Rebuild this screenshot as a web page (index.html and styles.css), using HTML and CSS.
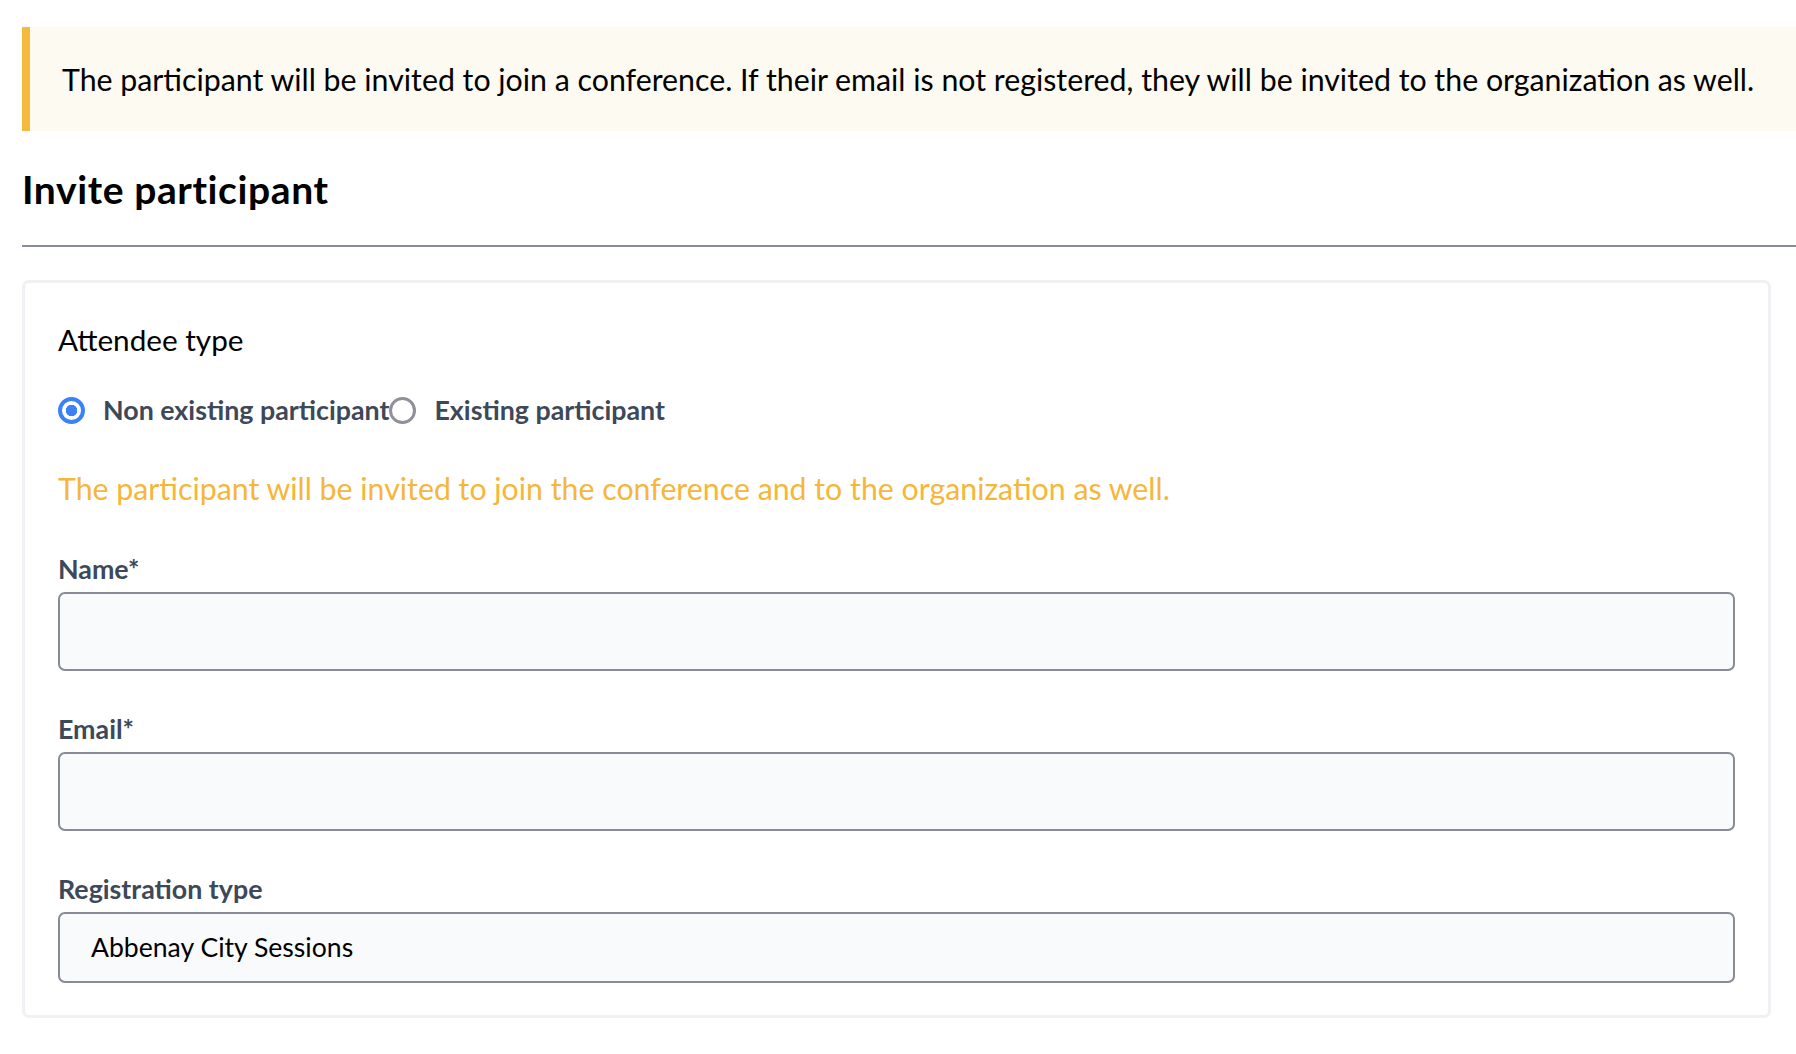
FILE: index.html
```html
<!DOCTYPE html>
<html lang="en">
<head>
<meta charset="utf-8">
<title>Invite participant</title>
<link rel="stylesheet" href="styles.css">
</head>
<body>
<div class="page">
  <div class="notice">The participant will be invited to join a conference. If their email is not registered, they will be invited to the organization as well.</div>
  <h1 class="title">Invite participant</h1>
  <div class="card">
    <div class="section-label">Attendee type</div>
    <div class="radio-row">
      <label class="radio-option">
        <span class="radio radio-checked"></span>
        <span class="radio-text">Non existing participant</span>
      </label>
      <label class="radio-option">
        <span class="radio"></span>
        <span class="radio-text">Existing participant</span>
      </label>
    </div>
    <p class="hint">The participant will be invited to join the conference and to the organization as well.</p>
    <div class="field">
      <label class="field-label">Name*</label>
      <input class="text-input" type="text">
    </div>
    <div class="field">
      <label class="field-label">Email*</label>
      <input class="text-input" type="text">
    </div>
    <div class="field">
      <label class="field-label">Registration type</label>
      <div class="select-input">Abbenay City Sessions</div>
    </div>
  </div>
</div>
</body>
</html>
```

FILE: styles.css
```css
html, body {
  margin: 0;
  padding: 0;
  background: #ffffff;
}

body {
  font-family: Lato, "Liberation Sans", sans-serif;
  color: #000000;
}

.page {
  padding: 27px 0 0 22px;
  overflow: hidden;
}

.notice {
  background: #fdfaf2;
  border-left: 8px solid #f5b93e;
  padding: 32px 32px 32px 32px;
  font-size: 30.3px;
  line-height: 40px;
  white-space: nowrap;
}

.title {
  margin: 38px 0 0 0;
  padding-bottom: 36px;
  border-bottom: 2px solid #898d98;
  font-size: 39px;
  line-height: 40px;
  letter-spacing: 0.6px;
  font-weight: 700;
}

.card {
  margin: 33px 25px 0 0;
  border: 3px solid #f0f1f5;
  border-radius: 7px;
  padding: 39px 33px 32px 33px;
  background: #ffffff;
}

.section-label {
  font-size: 29.7px;
  line-height: 36px;
}

.radio-row {
  display: flex;
  margin-top: 34px;
  height: 36px;
  align-items: center;
}

.radio-option {
  display: flex;
  align-items: center;
  gap: 18px;
}

.radio {
  box-sizing: border-box;
  width: 27px;
  height: 27px;
  border-radius: 50%;
  border: 3px solid #8f9099;
  background: #ffffff;
}

.radio-checked {
  border: 4px solid #3b82f6;
  background: radial-gradient(circle, #3b82f6 0 5.5px, #ffffff 6px);
}

.radio-text {
  font-size: 26.8px;
  line-height: 36px;
  font-weight: 700;
  color: #3d4858;
}

.hint {
  margin: 42px 0 0 0;
  font-size: 30.3px;
  line-height: 36px;
  color: #f5b63a;
}

.field {
  margin-top: 48px;
  display: flex;
  flex-direction: column;
}

.field + .field {
  margin-top: 43px;
}

.field-label {
  font-size: 26.8px;
  line-height: 30px;
  font-weight: 700;
  color: #3d4858;
  margin-bottom: 8px;
}

.text-input {
  box-sizing: border-box;
  height: 79px;
  width: 100%;
  margin: 0;
  border: 2px solid #878b96;
  border-radius: 7px;
  background: #f9fafb;
  font-family: inherit;
  font-size: 26.5px;
  padding: 0 31px;
  outline: none;
}

.select-input {
  box-sizing: border-box;
  height: 71px;
  border: 2px solid #878b96;
  border-radius: 7px;
  background: #f9fafb;
  padding: 0 31px;
  font-size: 26.6px;
  line-height: 67px;
  color: #000000;
}
```
